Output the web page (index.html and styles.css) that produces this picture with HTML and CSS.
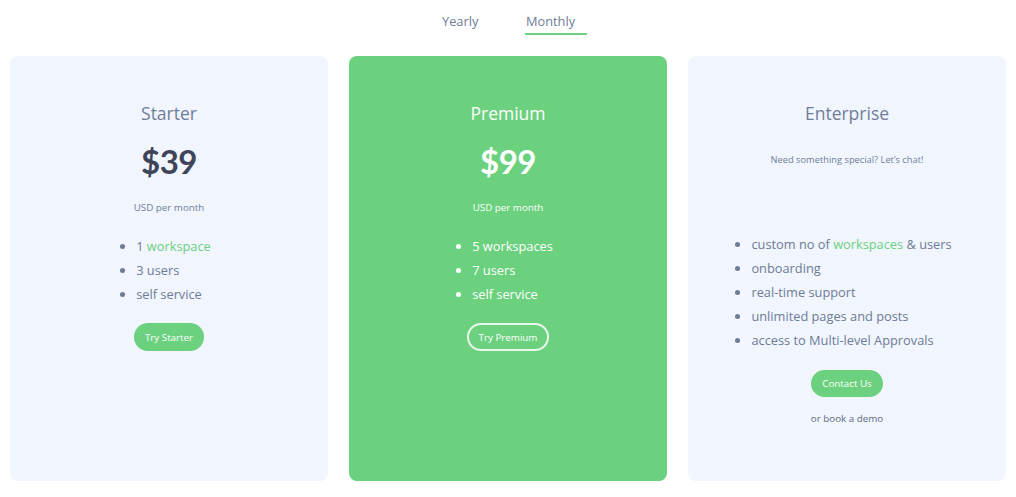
FILE: index.html
```html
<!DOCTYPE html>
<html lang="en">
<head>
    <meta charset="UTF-8">
    <meta name="viewport" content="width=device-width, initial-scale=1.0">
    <title>Pricing</title>
    <link rel="stylesheet" href="styles.css">
</head>
<body>
    <div class="tabs">
        <button class="tab">Yearly</button>
        <button class="tab active">Monthly</button>
    </div>

    <div class="plans">
        <div class="plan">
            <h2 class="plan-title">Starter</h2>
            <p class="price">$39</p>
            <p class="period">USD per month</p>
            <ul class="features">
                <li>1 <span class="hl">workspace</span></li>
                <li>3 users</li>
                <li>self service</li>
            </ul>
            <button class="btn">Try Starter</button>
        </div>

        <div class="plan featured">
            <h2 class="plan-title">Premium</h2>
            <p class="price">$99</p>
            <p class="period">USD per month</p>
            <ul class="features">
                <li>5 workspaces</li>
                <li>7 users</li>
                <li>self service</li>
            </ul>
            <button class="btn btn-outline">Try Premium</button>
        </div>

        <div class="plan enterprise">
            <h2 class="plan-title">Enterprise</h2>
            <p class="tagline">Need something special? Let’s chat!</p>
            <ul class="features">
                <li>custom no of <span class="hl">workspaces</span> &amp; users</li>
                <li>onboarding</li>
                <li>real-time support</li>
                <li>unlimited pages and posts</li>
                <li>access to Multi-level Approvals</li>
            </ul>
            <button class="btn btn-small">Contact Us</button>
            <p class="demo">or book a demo</p>
        </div>
    </div>
</body>
</html>
```

FILE: styles.css
```css
*{
    margin: 0;
    padding: 0;
    box-sizing: border-box;
}
body{
    background-color: #fff;
    font-family: "Open Sans", "Liberation Sans", sans-serif;
    color: #707d98;
}
.tabs{
    display: flex;
    justify-content: center;
    gap: 22px;
    padding-left: 12px;
}
.tab{
    width: 62px;
    border: none;
    background: none;
    font-family: inherit;
    font-size: 12.8px;
    line-height: 18px;
    color: #707d98;
    text-align: left;
    padding: 12px 0 3px 1px;
    border-bottom: 2px solid transparent;
}
.tab.active{
    border-bottom-color: #6bd17e;
}
.plans{
    display: grid;
    grid-template-columns: repeat(3, 1fr);
    gap: 21px;
    padding: 0 10px;
    margin-top: 21px;
}
.plan{
    height: 425px;
    background-color: #f0f5fe;
    border-radius: 8px;
    padding-top: 45px;
    display: flex;
    flex-direction: column;
    align-items: center;
}
.plan-title{
    font-size: 17.5px;
    line-height: 24px;
    font-weight: 400;
    color: #707d98;
}
.price{
    margin-top: 16px;
    font-family: Lato, "Open Sans", sans-serif;
    font-weight: 700;
    font-size: 33px;
    line-height: 40px;
    letter-spacing: -0.5px;
    color: #3f4459;
}
.period{
    margin-top: 20px;
    font-size: 9.8px;
    line-height: 14px;
}
.features{
    margin-top: 19px;
    padding: 0 5px 0 14px;
    font-size: 12.8px;
    line-height: 24px;
    color: #6e7b95;
}
.hl{
    color: #6bd17e;
}
.btn{
    margin-top: 17px;
    height: 28px;
    padding: 0 11px;
    border: none;
    border-radius: 14px;
    background-color: #6bd17e;
    color: #fff;
    font-family: inherit;
    font-size: 9.8px;
}
.featured{
    background-color: #6bd17e;
}
.featured .plan-title,
.featured .period,
.featured .features,
.featured .price{
    color: #fff;
}
.btn-outline{
    background: none;
    border: 2px solid rgba(255,255,255,0.85);
    padding: 0 10px;
}
.tagline{
    margin-top: 28px;
    font-size: 9.3px;
    line-height: 14px;
}
.enterprise .features{
    margin-top: 65px;
}
.btn-small{
    margin-top: 18px;
    height: 27px;
}
.demo{
    margin-top: 15px;
    font-size: 9.8px;
    line-height: 14px;
    color: #5f6b84;
}
```
